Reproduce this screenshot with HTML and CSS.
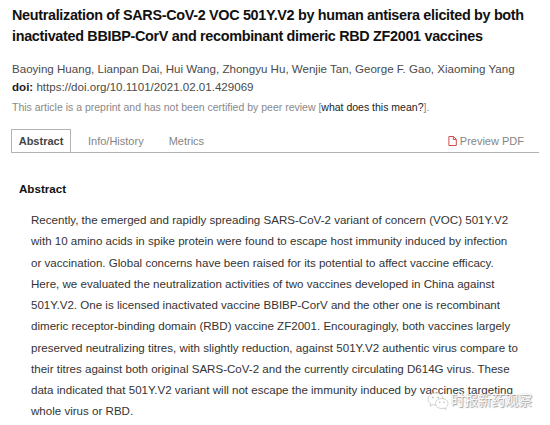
FILE: index.html
```html
<!DOCTYPE html>
<html lang="en">
<head>
  <meta charset="UTF-8" />
  <title>Neutralization of SARS-CoV-2 VOC 501Y.V2</title>
  <link rel="stylesheet" href="styles.css">
</head>
<body>

  <article class="paper">
    <h1 class="title">Neutralization of SARS-CoV-2 VOC 501Y.V2 by human antisera elicited by both<br />
      inactivated BBIBP-CorV and recombinant dimeric RBD ZF2001 vaccines</h1>

    <div class="authors">Baoying Huang, Lianpan Dai, Hui Wang, Zhongyu Hu, Wenjie Tan, George F. Gao, Xiaoming Yang</div>
    <div class="doi"><strong>doi:</strong> https://doi.org/10.1101/2021.02.01.429069</div>
    <div class="notice">This article is a preprint and has not been certified by peer review [<a>what does this mean?</a>].</div>

    <nav class="tabs">
      <a class="tab active">Abstract</a>
      <a class="tab info">Info/History</a>
      <a class="tab metrics">Metrics</a>
      <a class="pdf">
        <svg class="pdf-icon" viewBox="0 0 9 10" width="9" height="10">
          <path d="M.9.5h4.6l2.8 2.8v6.2H.9zM5.3.5v3h3" />
        </svg>
        <span>Preview PDF</span>
      </a>
    </nav>

    <section class="abstract">
      <h2>Abstract</h2>
      <p>Recently, the emerged and rapidly spreading SARS-CoV-2 variant of concern (VOC) 501Y.V2<br />
        with 10 amino acids in spike protein were found to escape host immunity induced by infection<br />
        or vaccination. Global concerns have been raised for its potential to affect vaccine efficacy.<br />
        Here, we evaluated the neutralization activities of two vaccines developed in China against<br />
        501Y.V2. One is licensed inactivated vaccine BBIBP-CorV and the other one is recombinant<br />
        dimeric receptor-binding domain (RBD) vaccine ZF2001. Encouragingly, both vaccines largely<br />
        preserved neutralizing titres, with slightly reduction, against 501Y.V2 authentic virus compare to<br />
        their titres against both original SARS-CoV-2 and the currently circulating D614G virus. These<br />
        data indicated that 501Y.V2 variant will not escape the immunity induced by vaccines targeting<br />
        whole virus or RBD.</p>
    </section>
  </article>

  <div class="watermark">
    <svg class="wechat" viewBox="0 0 22 18" width="22" height="18">
      <path d="M8.500 1C4.300 1 1 3.600 1 7c0 2 1 3.500 2.700 4.600L3 14l2.700-1.400c1 .3 2 .4 3.200.4 4-.2 7-2.700 7-6S12.700 1 8.500 1z" />
      <path d="M14.800 6.500c-3.500 0-6.200 2.200-6.200 5s2.700 5 6.200 5c.8 0 1.500-.1 2.200-.3l2.100 1.200-.5-2c1.500-1 2.400-2.300 2.400-3.900 0-2.800-2.700-5-6.200-5z" />
      <g class="eyes">
        <circle cx="6" cy="5.500" r=".8" /><circle cx="11" cy="5.500" r=".8" />
        <circle cx="12.800" cy="10.300" r=".7" /><circle cx="17" cy="10.300" r=".7" />
      </g>
    </svg>
    <span>时报新药观察</span>
  </div>

</body>
</html>
```
FILE: styles.css
```css
body {
  margin: 0;
  background: #fff;
  font-family: "Liberation Sans", Arial, sans-serif;
  color: #333;
}

.paper {
  padding: 5px 11px 0 12px;
}

.title {
  margin: 0;
  font-size: 14.4px;
  letter-spacing: -.32px;
  line-height: 21px;
  color: #111;
  white-space: nowrap;
}

.authors {
  margin-top: 13px;
  font-size: 11.57px;
  line-height: 18px;
  color: #4a4a4a;
  white-space: nowrap;
}

.doi {
  font-size: 11.57px;
  line-height: 18px;
  color: #4a4a4a;
}

.doi strong {
  color: #222;
}

.notice {
  margin-top: 2px;
  font-size: 10.5px;
  line-height: 18px;
  color: #888;
}

.notice a {
  color: #222;
}

.tabs {
  display: flex;
  align-items: center;
  height: 23px;
  margin: 13px 0 0 -1px;
  border-bottom: 1px solid #b3b3b3;
  font-size: 11px;
  color: #858585;
}

.tab.active {
  box-sizing: border-box;
  width: 60px;
  height: 23px;
  border: 1px solid #b3b3b3;
  border-bottom: 0;
  line-height: 22px;
  text-align: center;
  font-weight: bold;
  color: #444;
}

.info {
  margin-left: 17px;
}

.metrics {
  margin-left: 25px;
}

.pdf {
  display: flex;
  align-items: center;
  gap: 3px;
  margin-left: auto;
  margin-right: 15px;
}

.pdf-icon {
  fill: none;
  stroke: #d34b4b;
}

.abstract {
  padding: 27px 0 0 7px;
}

.abstract h2 {
  margin: 0;
  font-size: 11.6px;
  line-height: 18px;
  color: #111;
}

.abstract p {
  margin: 12px 0 0 12px;
  font-size: 11.57px;
  line-height: 21.25px;
  white-space: nowrap;
}

/* account name printed over the last lines */
.watermark {
  position: absolute;
  left: 427px;
  top: 390px;
  display: flex;
  align-items: center;
  gap: 2px;
  font-family: "Liberation Sans", "Noto Sans CJK SC", sans-serif;
  font-size: 13.5px;
  line-height: 22px;
  color: #fff;
  text-shadow: 1px 1px 1px #999, 0 0 1px #aaa;
}

.wechat {
  fill: #fff;
  stroke: #bbb;
  stroke-width: .7;
}

.eyes {
  fill: #aaa;
  stroke: none;
}
```
